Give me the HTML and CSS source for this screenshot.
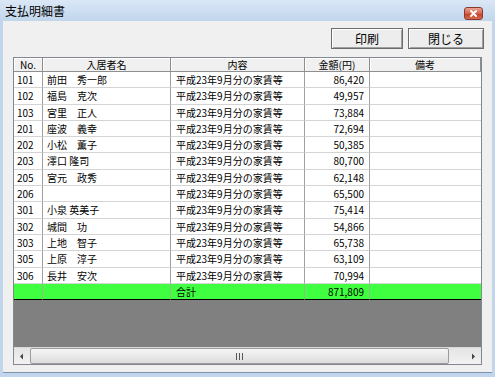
FILE: index.html
```html
<!DOCTYPE html>
<html lang="ja">
<head>
  <meta charset="UTF-8" />
  <title>支払明細書</title>
  <link rel="stylesheet" href="styles.css">
</head>
<body>
  <div class="window">
    <div class="titlebar">
      <span class="title">支払明細書</span>
      <span class="close">
        <svg width="17" height="11" viewBox="0 0 17 11">
          <path d="M6 3 L11 8 M11 3 L6 8" stroke="#fff" stroke-width="2" stroke-linecap="round"/>
        </svg>
      </span>
    </div>
    <div class="client">
      <div class="toolbar">
        <button class="btn print">印刷</button>
        <button class="btn close-btn">閉じる</button>
      </div>
      <div class="grid">
        <div class="row head">
          <div class="cell">No.</div>
          <div class="cell">入居者名</div>
          <div class="cell">内容</div>
          <div class="cell">金額(円)</div>
          <div class="cell">備考</div>
        </div>
        <div class="row"><div class="cell">101</div><div class="cell name">前田　秀一郎</div><div class="cell">平成23年9月分の家賃等</div><div class="cell num">86,420</div><div class="cell"></div></div>
        <div class="row"><div class="cell">102</div><div class="cell name">福島　克次</div><div class="cell">平成23年9月分の家賃等</div><div class="cell num">49,957</div><div class="cell"></div></div>
        <div class="row"><div class="cell">103</div><div class="cell name">宮里　正人</div><div class="cell">平成23年9月分の家賃等</div><div class="cell num">73,884</div><div class="cell"></div></div>
        <div class="row"><div class="cell">201</div><div class="cell name">座波　義幸</div><div class="cell">平成23年9月分の家賃等</div><div class="cell num">72,694</div><div class="cell"></div></div>
        <div class="row"><div class="cell">202</div><div class="cell name">小松　薫子</div><div class="cell">平成23年9月分の家賃等</div><div class="cell num">50,385</div><div class="cell"></div></div>
        <div class="row"><div class="cell">203</div><div class="cell name">澤口 隆司</div><div class="cell">平成23年9月分の家賃等</div><div class="cell num">80,700</div><div class="cell"></div></div>
        <div class="row"><div class="cell">205</div><div class="cell name">宮元　政秀</div><div class="cell">平成23年9月分の家賃等</div><div class="cell num">62,148</div><div class="cell"></div></div>
        <div class="row"><div class="cell">206</div><div class="cell name"></div><div class="cell">平成23年9月分の家賃等</div><div class="cell num">65,500</div><div class="cell"></div></div>
        <div class="row"><div class="cell">301</div><div class="cell name">小泉 英美子</div><div class="cell">平成23年9月分の家賃等</div><div class="cell num">75,414</div><div class="cell"></div></div>
        <div class="row"><div class="cell">302</div><div class="cell name">城間　功</div><div class="cell">平成23年9月分の家賃等</div><div class="cell num">54,866</div><div class="cell"></div></div>
        <div class="row"><div class="cell">303</div><div class="cell name">上地　智子</div><div class="cell">平成23年9月分の家賃等</div><div class="cell num">65,738</div><div class="cell"></div></div>
        <div class="row"><div class="cell">305</div><div class="cell name">上原　淳子</div><div class="cell">平成23年9月分の家賃等</div><div class="cell num">63,109</div><div class="cell"></div></div>
        <div class="row"><div class="cell">306</div><div class="cell name">長井　安次</div><div class="cell">平成23年9月分の家賃等</div><div class="cell num">70,994</div><div class="cell"></div></div>
        <div class="row total"><div class="cell"></div><div class="cell name"></div><div class="cell">合計</div><div class="cell num">871,809</div><div class="cell"></div></div>
        <div class="empty"></div>
        <div class="hscroll">
          <span class="sb-btn">
            <svg width="16" height="15" viewBox="0 0 16 15"><path d="M6 7.5 L9 4.5 L9 10.5 Z" fill="#444"/></svg>
          </span>
          <span class="sb-thumb">
            <svg width="7" height="7" viewBox="0 0 7 7"><path d="M0.5 0 V7 M3.5 0 V7 M6.5 0 V7" stroke="#555" stroke-width="1"/></svg>
          </span>
          <span class="sb-track"></span>
          <span class="sb-btn">
            <svg width="16" height="15" viewBox="0 0 16 15"><path d="M10 7.5 L7 4.5 L7 10.5 Z" fill="#444"/></svg>
          </span>
        </div>
      </div>
    </div>
  </div>
</body>
</html>
```

FILE: styles.css
```css
body {
  margin: 0;
  font-family: "Noto Sans CJK JP", sans-serif;
  color: #000;
}

.window {
  width: 495px;
  height: 377px;
  background: #c1d6ec;
  display: flex;
  flex-direction: column;
  position: relative;
  overflow: hidden;
}

.titlebar {
  height: 21px;
  flex: none;
  display: flex;
  align-items: center;
  padding-left: 5px;
  background: linear-gradient(#dae7f6, #c1d6ec);
}
.title {
  font-size: 12px;
  line-height: 14px;
}
.close {
  position: absolute;
  top: 7px;
  right: 12px;
  width: 17px;
  height: 11px;
  border: 1px solid #8d3a2e;
  border-radius: 3px;
  background: linear-gradient(#eaa494, #d5604a 50%, #c23c24 51%, #d9694f);
  display: flex;
}

.client {
  flex: 1;
  margin: 0 3px 4px;
  padding: 7px 8px 7px 10px;
  background: #f0f0f0;
  border-bottom: 1px solid #7d93ad;
  display: flex;
  flex-direction: column;
}

.toolbar {
  display: flex;
  justify-content: flex-end;
  gap: 5px;
  margin-bottom: 8px;
}
.btn {
  height: 21px;
  width: 72px;
  padding: 0;
  font-family: inherit;
  font-size: 12px;
  background: #ededed;
  border: 1px solid #6c6c6c;
  box-shadow: inset 1px 1px #fff, inset -1px -1px #a0a0a0;
  color: #000;
}
.btn.close-btn {
  width: 76px;
}

.grid {
  flex: 1;
  margin-right: 2px;
  border: 1px solid #828790;
  background: #808080;
  display: flex;
  flex-direction: column;
}

.row {
  display: grid;
  grid-template-columns: 29px 128px 134px 65px 1fr;
  height: 16.3px;
  flex: none;
  background: #fff;
}
.cell {
  border-right: 1px solid #a0a0a0;
  border-bottom: 1px solid #d4d4d4;
  font-size: 10px;
  line-height: 15px;
  padding: 0 0 0 3px;
  white-space: nowrap;
  overflow: hidden;
}
.cell:last-child {
  border-right: none;
}
.cell.name {
  padding-left: 4px;
}
.row .cell:nth-child(3) {
  padding-left: 5px;
}
.cell.num {
  text-align: right;
  padding: 0 5px 0 0;
}

.row.head {
  height: 14px;
  background: #f0f0f0;
}
.row.head .cell {
  text-align: center;
  line-height: 13px;
  padding: 0;
  border-right: 1px solid #8e8e8e;
  border-bottom: 1px solid #8e8e8e;
  box-shadow: inset 1px 1px #fff;
}
.row.head .cell:last-child {
  border-right: 1px solid #8e8e8e;
}

.row.total {
  background: #40ff40;
}
.row.total .cell {
  border-bottom: 1px solid #000;
  border-right-color: #88c088;
}

.empty {
  flex: 1;
}

.hscroll {
  height: 16px;
  flex: none;
  display: flex;
  background: linear-gradient(#e4e4e4, #f2f2f2);
  border-top: 1px solid #d8d8d8;
}
.sb-btn {
  width: 16px;
  display: flex;
  align-items: center;
  justify-content: center;
}
.sb-thumb {
  width: 419px;
  box-sizing: border-box;
  border: 1px solid #9c9c9c;
  border-radius: 2px;
  background: linear-gradient(#f6f6f6, #dcdcdc);
  display: flex;
  align-items: center;
  justify-content: center;
}
.sb-track {
  flex: 1;
}
```
